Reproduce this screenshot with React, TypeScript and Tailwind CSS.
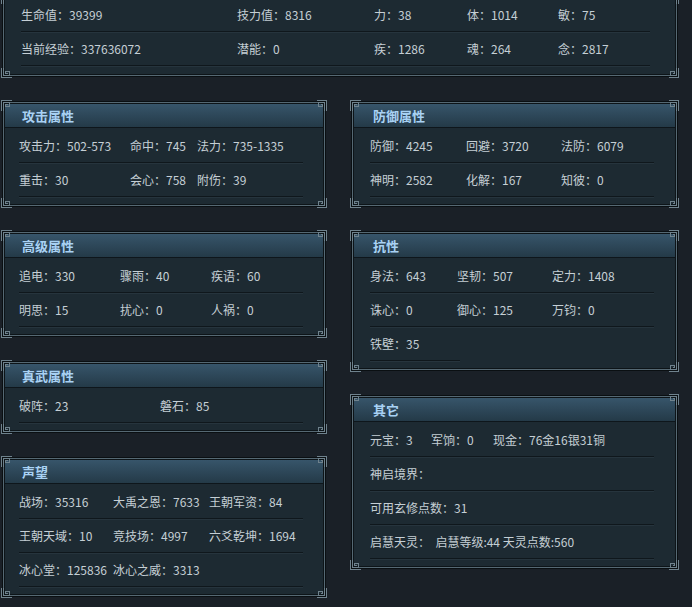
type Cell = { t: string; w: string };

const font = { fontFamily: '"Noto Sans CJK SC", "Liberation Sans", sans-serif' };

function Corner({ className }: { className: string }) {
  return (
    <svg
      className={`absolute w-[11px] h-[11px] pointer-events-none ${className}`}
      viewBox="0 0 11 11"
      fill="none"
      stroke="#6f828d"
      strokeWidth="1"
      shapeRendering="crispEdges"
    >
      <path d="M0.5 10.5V0.5H10.5 M2.5 10.5V2.5H8.5V6.5H4.5V4.5H6.5" />
    </svg>
  );
}

function Frame({ children }: { children: React.ReactNode }) {
  return (
    <div className="relative border border-[#0a0f12]">
      <div className="border border-[#556873]">
        <div className="border border-[#0d1418] bg-[#1d2a32]">{children}</div>
      </div>
      <Corner className="-left-[2px] -top-[2px]" />
      <Corner className="-right-[2px] -top-[2px] -scale-x-100" />
      <Corner className="-left-[2px] -bottom-[2px] -scale-y-100" />
      <Corner className="-right-[2px] -bottom-[2px] -scale-100" />
    </div>
  );
}

function Rows({ rows, pad }: { rows: Cell[][]; pad: string }) {
  return (
    <div className={`${pad} pt-[1px] pb-[7px]`}>
      {rows.map((r, i) => (
        <div key={i} className="flex">
          {r.map((c, j) => (
            <div
              key={j}
              className={`${c.w} h-[34px] flex items-center whitespace-nowrap border-b border-[#0f171c] shadow-[0_1px_0_#26343d]`}
            >
              {c.t}
            </div>
          ))}
        </div>
      ))}
    </div>
  );
}

function Panel({ title, rows, right }: { title: string; rows: Cell[][]; right?: boolean }) {
  return (
    <Frame>
      <div
        className={`h-[24px] flex items-center ${right ? "pl-[19px]" : "pl-[17px]"} bg-gradient-to-b from-[#37556a] to-[#243a48] border-b border-[#0e161b] text-[13px] font-bold text-[#a9d2f4]`}
      >
        {title}
      </div>
      <Rows rows={rows} pad={right ? "pl-[16px] pr-[21px]" : "pl-[14px] pr-[20px]"} />
    </Frame>
  );
}

const c = (t: string, w: string): Cell => ({ t, w });

export default function App() {
  return (
    <div className="w-[692px] h-[607px] overflow-hidden bg-[#1a2027] text-[12px] text-[#c5cfd5] pl-[2px]" style={font}>
      <div className="-mt-[6px] w-[676px]">
        <Frame>
          <div className="pl-[16px] pr-[25px] pt-[1px] pb-[8px]">
            {[
              [c("生命值：39399", "w-[216px]"), c("技力值：8316", "w-[137px]"), c("力：38", "w-[93px]"), c("体：1014", "w-[91px]"), c("敏：75", "flex-1")],
              [c("当前经验：337636072", "w-[216px]"), c("潜能：0", "w-[137px]"), c("疾：1286", "w-[93px]"), c("魂：264", "w-[91px]"), c("念：2817", "flex-1")],
            ].map((r, i) => (
              <div key={i} className="flex">
                {r.map((x, j) => (
                  <div
                    key={j}
                    className={`${x.w} h-[34px] flex items-center whitespace-nowrap border-b border-[#0f171c] shadow-[0_1px_0_#26343d]`}
                  >
                    {x.t}
                  </div>
                ))}
              </div>
            ))}
          </div>
        </Frame>
      </div>

      <div className="flex gap-[25px] mt-[24px]">
        <div className="w-[324px] flex flex-col gap-[24px]">
          <Panel
            title="攻击属性"
            rows={[
              [c("攻击力：502-573", "w-[111px]"), c("命中：745", "w-[67px]"), c("法力：735-1335", "flex-1")],
              [c("重击：30", "w-[111px]"), c("会心：758", "w-[67px]"), c("附伤：39", "flex-1")],
            ]}
          />
          <Panel
            title="高级属性"
            rows={[
              [c("追电：330", "w-[101px]"), c("骤雨：40", "w-[91px]"), c("疾语：60", "flex-1")],
              [c("明思：15", "w-[101px]"), c("扰心：0", "w-[91px]"), c("人祸：0", "flex-1")],
            ]}
          />
          <Panel title="真武属性" rows={[[c("破阵：23", "w-[141px]"), c("磐石：85", "flex-1")]]} />
          <Panel
            title="声望"
            rows={[
              [c("战场：35316", "w-[94px]"), c("大禹之恩：7633", "w-[96px]"), c("王朝军资：84", "flex-1")],
              [c("王朝天域：10", "w-[94px]"), c("竞技场：4997", "w-[96px]"), c("六爻乾坤：1694", "flex-1")],
              [c("冰心堂：125836", "w-[94px]"), c("冰心之威：3313", "w-[96px]"), c("", "flex-1")],
            ]}
          />
        </div>
        <div className="w-[327px] flex flex-col gap-[24px]">
          <Panel
            right
            title="防御属性"
            rows={[
              [c("防御：4245", "w-[96px]"), c("回避：3720", "w-[95px]"), c("法防：6079", "flex-1")],
              [c("神明：2582", "w-[96px]"), c("化解：167", "w-[95px]"), c("知彼：0", "flex-1")],
            ]}
          />
          <Panel
            right
            title="抗性"
            rows={[
              [c("身法：643", "w-[87px]"), c("坚韧：507", "w-[95px]"), c("定力：1408", "flex-1")],
              [c("诛心：0", "w-[87px]"), c("御心：125", "w-[95px]"), c("万钧：0", "flex-1")],
              [c("铁壁：35", "w-[90px]")],
            ]}
          />
          <Panel
            right
            title="其它"
            rows={[
              [c("元宝：3", "w-[61px]"), c("军饷：0", "w-[62px]"), c("现金：76金16银31铜", "flex-1")],
              [c("神启境界：", "flex-1")],
              [c("可用玄修点数：31", "flex-1")],
              [c("启慧天灵：  启慧等级:44 天灵点数:560", "flex-1 whitespace-pre")],
            ]}
          />
        </div>
      </div>
    </div>
  );
}
